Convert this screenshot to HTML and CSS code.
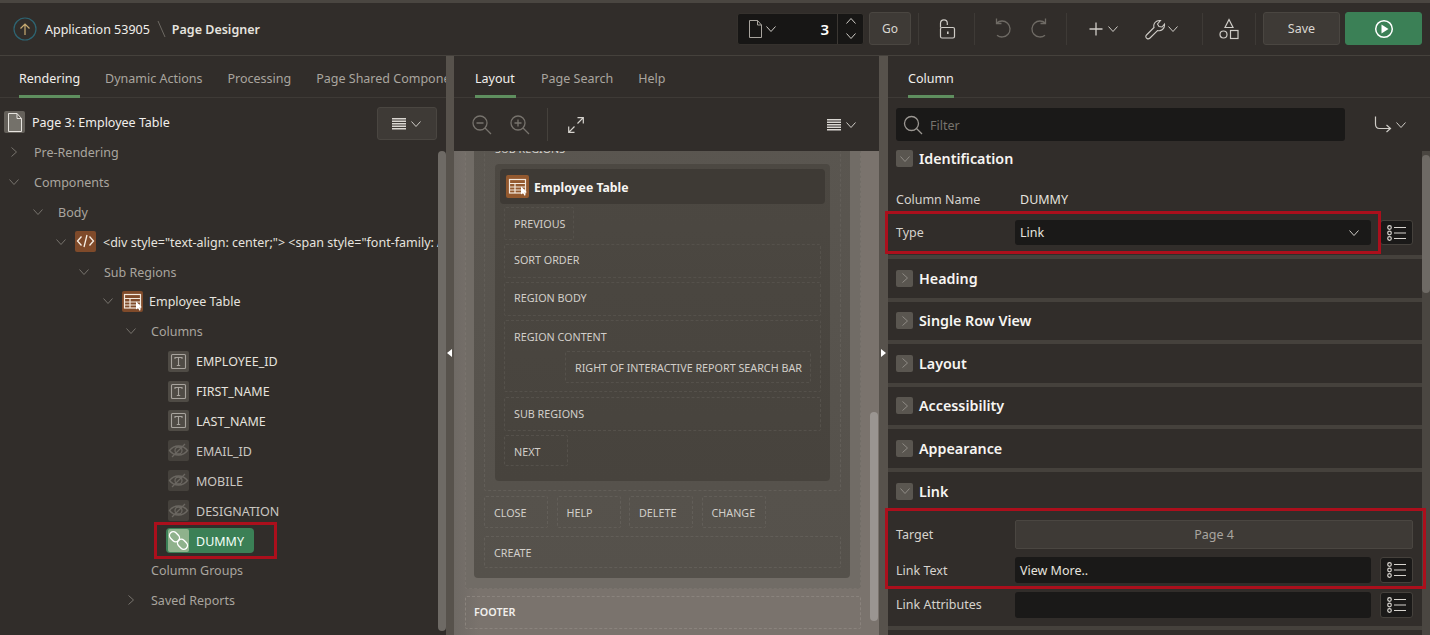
FILE: index.html
```html
<!DOCTYPE html>
<html lang="en">
<head>
<meta charset="UTF-8" />
<title>Page Designer</title>
<link rel="stylesheet" href="styles.css">
</head>
<body>
  <svg class="defs" aria-hidden="true">
    <symbol id="chev-d" viewBox="0 0 12 12"><path d="M1.5 3.5 6 8.500l4.500-5" fill="none" stroke="currentColor"/></symbol>
    <symbol id="chev-r" viewBox="0 0 12 12"><path d="M3.500 1.500 8.500 6l-5 4.500" fill="none" stroke="currentColor"/></symbol>
    <symbol id="menu" viewBox="0 0 14 12"><path d="M0 .75h14M0 3.250h14M0 5.750h14M0 8.250h14M0 10.750h14" stroke="currentColor" stroke-width="1.300"/></symbol>
    <symbol id="list" viewBox="0 0 20 16"><g fill="none" stroke="currentColor" stroke-width="1.200"><circle cx="2.500" cy="2.500" r="1.800"/><circle cx="2.500" cy="8" r="1.800"/><circle cx="2.500" cy="13.500" r="1.800"/><path d="M7 2.500h12M7 8h12M7 13.500h12"/></g></symbol>
    <symbol id="t-col" viewBox="0 0 21 21"><g fill="none" stroke="#a8a49e" stroke-width="1.100"><rect x="3.500" y="3.500" width="14" height="14" rx="1"/><path d="M7 8V6.500h7V8M10.500 6.500v8M8.800 14.500h3.400"/></g></symbol>
    <symbol id="eye-off" viewBox="0 0 21 21"><g fill="none" stroke="#6b6761" stroke-width="1.300"><path d="M1.500 10.500c4.500-6 13.500-6 18 0-4.500 6-13.500 6-18 0z"/><circle cx="10.500" cy="10.500" r="3.500"/><path d="M4 17 17 4"/></g></symbol>
    <symbol id="grid-t" viewBox="0 0 21 21"><g fill="none" stroke="#f3e9de" stroke-width="1.200"><rect x="2.500" y="3.500" width="16" height="13.500"/><path d="M2.500 7.500h16M2.500 11h16M2.500 14h16M8 7.500V17"/></g><path d="M14 10.500v8l2-1.800 1.500 3 1.200-.6-1.400-2.900h2.600z" fill="#fff"/></symbol>
  </svg>

  <div class="topstrip"></div>
  <header class="header">
    <div class="crumb">
      <svg class="up-icon" width="24" height="24" viewBox="0 0 24 24"><circle cx="12" cy="12" r="11" fill="none" stroke="#2e6573" stroke-width="1.200"/><path d="M12 18V7M7.500 11.500 12 7l4.500 4.500" fill="none" stroke="#c9ab72" stroke-width="1.200"/></svg>
      <span class="crumb-app">Application 53905</span>
      <svg class="crumb-sep" width="9" height="18" viewBox="0 0 9 18"><path d="M1 1l7 16" stroke="#6d6963"/></svg>
      <strong class="crumb-page">Page Designer</strong>
    </div>
    <div class="tools">
      <div class="page-select">
        <svg width="15" height="18" viewBox="0 0 15 18"><path d="M1.500.5h8l4 4.500v12.500h-12zM9.500.5V5h4" fill="none" stroke="#a8a49e"/></svg>
        <svg class="chev" width="12" height="12"><use href="#chev-d"/></svg>
        <span class="page-num">3</span>
        <span class="spin">
          <svg class="chev flip" width="12" height="12"><use href="#chev-d"/></svg>
          <svg class="chev" width="12" height="12"><use href="#chev-d"/></svg>
        </span>
      </div>
      <button class="btn btn-go">Go</button>
      <div class="tool-group group-lock">
        <svg width="18" height="20" viewBox="0 0 18 20"><g fill="none" stroke="#cfccc7" stroke-width="1.200"><rect x="2.500" y="8.500" width="14" height="10.500" rx="1.500"/><path d="M2.500 8.500V4.200a3.400 3.400 0 0 1 6.800 0V6"/></g><rect x="9" y="12.500" width="1.600" height="2.500" fill="#cfccc7"/></svg>
      </div>
      <div class="tool-group group-history">
        <svg width="20" height="24" viewBox="0 0 20 24"><path d="M4.500 6.200A8 8 0 1 1 5 18.200M4.500 1.500v5h5" fill="none" stroke="#6f6b65" stroke-width="1.300"/></svg>
        <svg width="20" height="24" viewBox="0 0 20 24"><path d="M15.500 6.200A8 8 0 1 0 15 18.200M15.500 1.500v5h-5" fill="none" stroke="#6f6b65" stroke-width="1.300"/></svg>
      </div>
      <div class="tool-group group-add">
        <svg width="16" height="16" viewBox="0 0 16 16"><path d="M8 1.500v13M1.500 8h13" stroke="#cfccc7" stroke-width="1.300"/></svg>
        <svg class="chev" width="12" height="12"><use href="#chev-d"/></svg>
        <svg class="wrench" width="22" height="22" viewBox="0 0 22 22"><path d="M3 20.500c-1.500-1-1.500-2.500-.5-3.500L10 9.500C9 6 11.500 2 16.500 2.500l-3 3.500 1.500 2.500 3 .5 2.500-3c.5 5-3.500 7.500-7 6.500L6 20c-1 1-2 1.200-3 .5z" fill="none" stroke="#cfccc7" stroke-width="1.100"/></svg>
        <svg class="chev" width="12" height="12"><use href="#chev-d"/></svg>
      </div>
      <div class="tool-group group-shapes">
        <svg width="20" height="22" viewBox="0 0 20 22"><g fill="none" stroke="#cfccc7" stroke-width="1.200"><path d="M10 1.500 14 9.500H6z"/><circle cx="4.500" cy="16.500" r="3.500"/><rect x="11.500" y="12.500" width="7.500" height="8"/></g></svg>
      </div>
      <button class="btn btn-save">Save</button>
      <button class="btn btn-run">
        <svg width="20" height="20" viewBox="0 0 20 20"><circle cx="10" cy="10" r="8.300" fill="none" stroke="#fff" stroke-width="1.500"/><path d="M7.500 5.500 14.500 10l-7 4.500z" fill="#fff"/></svg>
      </button>
    </div>
  </header>

  <main class="designer">
    <section class="pane pane-left">
      <nav class="tabs">
        <a class="tab active">Rendering</a>
        <a class="tab">Dynamic Actions</a>
        <a class="tab">Processing</a>
        <a class="tab">Page Shared Components</a>
      </nav>
      <div class="tree-head">
        <span class="ico ico-page">
          <svg width="16" height="19" viewBox="0 0 16 19"><path d="M1.500.5h8.500l4.500 5v13h-13zM10 .5v5h4.500" fill="#e8e5e0" fill-opacity=".12" stroke="#e8e5e0"/></svg>
        </span>
        <span class="tree-title">Page 3: Employee Table</span>
        <button class="btn btn-menu">
          <svg width="14" height="12"><use href="#menu"/></svg>
          <svg class="chev" width="12" height="12"><use href="#chev-d"/></svg>
        </button>
      </div>
      <div class="tree">
        <div class="row lv0"><svg class="tog" width="12" height="12"><use href="#chev-r"/></svg><span class="muted">Pre-Rendering</span></div>
        <div class="row lv0"><svg class="tog" width="12" height="12"><use href="#chev-d"/></svg><span class="muted">Components</span></div>
        <div class="row lv1"><svg class="tog" width="12" height="12"><use href="#chev-d"/></svg><span class="muted">Body</span></div>
        <div class="row lv2">
          <svg class="tog tog-ico" width="12" height="12"><use href="#chev-d"/></svg>
          <span class="ico ico-region"><svg width="21" height="21" viewBox="0 0 21 21"><path d="M6.500 5.500 2.500 10l4 4.500M14.500 5.500l4 4.500-4 4.500M12 4l-3 12" fill="none" stroke="#f7efe6" stroke-width="1.300"/></svg></span>
          <span class="item">&lt;div style="text-align: center;"&gt; &lt;span style="font-family: Arial, sans-serif;"&gt;</span>
        </div>
        <div class="row lv3"><svg class="tog" width="12" height="12"><use href="#chev-d"/></svg><span class="muted">Sub Regions</span></div>
        <div class="row lv4">
          <svg class="tog tog-ico" width="12" height="12"><use href="#chev-d"/></svg>
          <span class="ico ico-region"><svg width="21" height="21"><use href="#grid-t"/></svg></span>
          <span class="item">Employee Table</span>
        </div>
        <div class="row lv5"><svg class="tog" width="12" height="12"><use href="#chev-d"/></svg><span class="muted">Columns</span></div>
        <div class="row lv6"><span class="ico ico-col"><svg width="21" height="21"><use href="#t-col"/></svg></span><span class="item">EMPLOYEE_ID</span></div>
        <div class="row lv6"><span class="ico ico-col"><svg width="21" height="21"><use href="#t-col"/></svg></span><span class="item">FIRST_NAME</span></div>
        <div class="row lv6"><span class="ico ico-col"><svg width="21" height="21"><use href="#t-col"/></svg></span><span class="item">LAST_NAME</span></div>
        <div class="row lv6"><span class="ico ico-hidden"><svg width="21" height="21"><use href="#eye-off"/></svg></span><span class="item dim">EMAIL_ID</span></div>
        <div class="row lv6"><span class="ico ico-hidden"><svg width="21" height="21"><use href="#eye-off"/></svg></span><span class="item dim">MOBILE</span></div>
        <div class="row lv6"><span class="ico ico-hidden"><svg width="21" height="21"><use href="#eye-off"/></svg></span><span class="item dim">DESIGNATION</span></div>
        <div class="row lv6">
          <span class="selected">
            <span class="ico ico-link"><svg width="21" height="21" viewBox="0 0 21 21"><g fill="none" stroke="#fff" stroke-width="1.400"><rect x="1" y="3" width="11" height="7.500" rx="3.750" transform="rotate(45 6.500 6.750)"/><rect x="9" y="10.500" width="11" height="7.500" rx="3.750" transform="rotate(45 14.500 14.250)"/></g></svg></span>
            <span class="item">DUMMY</span>
          </span>
        </div>
        <div class="row lv5b"><span class="muted">Column Groups</span></div>
        <div class="row lv5"><svg class="tog" width="12" height="12"><use href="#chev-r"/></svg><span class="muted">Saved Reports</span></div>
      </div>
      <div class="thumb thumb-left"></div>
    </section>

    <div class="splitter"><span class="arrow arrow-left"></span></div>

    <section class="pane pane-mid">
      <nav class="tabs">
        <a class="tab active">Layout</a>
        <a class="tab">Page Search</a>
        <a class="tab">Help</a>
      </nav>
      <div class="mid-bar">
        <svg width="20" height="20" viewBox="0 0 20 20"><g fill="none" stroke="#77736d" stroke-width="1.300"><circle cx="8" cy="8" r="7"/><path d="M13 13l6 6M4.500 8h7"/></g></svg>
        <svg class="zoom-in" width="20" height="20" viewBox="0 0 20 20"><g fill="none" stroke="#77736d" stroke-width="1.300"><circle cx="8" cy="8" r="7"/><path d="M13 13l6 6M4.500 8h7M8 4.500v7"/></g></svg>
        <span class="mid-div"></span>
        <svg width="16" height="16" viewBox="0 0 16 16"><g fill="none" stroke="#d6d3ce" stroke-width="1.200"><path d="M9.500.7h5.800v5.800M15.300.7 9.500 6.500M6.500 15.300H.7V9.500M.7 15.300l5.800-5.800"/></g></svg>
        <span class="mid-menu">
          <svg width="14" height="12"><use href="#menu"/></svg>
          <svg class="chev" width="12" height="12"><use href="#chev-d"/></svg>
        </span>
      </div>
      <div class="canvas">
        <div class="slot slot-body">
          <div class="dark">
            <div class="slot slot-sub">
              <span class="slot-label">SUB REGIONS</span>
              <div class="card">
                <div class="card-head">
                  <span class="ico ico-region ico-card"><svg width="21" height="21"><use href="#grid-t"/></svg></span>
                  <strong>Employee Table</strong>
                </div>
                <div class="slot s-prev">PREVIOUS</div>
                <div class="slot s-wide">SORT ORDER</div>
                <div class="slot s-wide">REGION BODY</div>
                <div class="slot s-content">
                  <span>REGION CONTENT</span>
                  <div class="slot s-right">RIGHT OF INTERACTIVE REPORT SEARCH BAR</div>
                </div>
                <div class="slot s-wide s-subs">SUB REGIONS</div>
                <div class="slot s-next">NEXT</div>
              </div>
            </div>
            <div class="btn-slots">
              <div class="slot s-btn">CLOSE</div>
              <div class="slot s-btn">HELP</div>
              <div class="slot s-btn">DELETE</div>
              <div class="slot s-btn">CHANGE</div>
            </div>
            <div class="slot s-create">CREATE</div>
          </div>
        </div>
        <div class="slot s-footer">FOOTER</div>
        <div class="thumb thumb-mid"></div>
      </div>
    </section>

    <div class="splitter"><span class="arrow arrow-right"></span></div>

    <section class="pane pane-right">
      <nav class="tabs">
        <a class="tab active">Column</a>
      </nav>
      <div class="filter-bar">
        <div class="filter">
          <svg width="20" height="20" viewBox="0 0 20 20"><g fill="none" stroke="#9b9792" stroke-width="1.300"><circle cx="8.500" cy="8.500" r="7"/><path d="M13.500 13.500l5.500 5.500"/></g></svg>
          <span>Filter</span>
        </div>
        <span class="filter-go">
          <svg width="20" height="20" viewBox="0 0 20 20"><path d="M1.500 1.500V9c0 3 1.500 4.500 4 4.500H16M12.500 10l4 3.500-4 3.500" fill="none" stroke="#cfccc7" stroke-width="1.200"/></svg>
          <svg class="chev" width="12" height="12"><use href="#chev-d"/></svg>
        </span>
      </div>
      <div class="props">
        <div class="sections">
          <div class="sect sect-ident">
            <h3 class="sect-head ident-head"><span class="toggle"><svg width="12" height="12"><use href="#chev-d"/></svg></span>Identification</h3>
            <div class="fields">
              <label class="f-name">Column Name</label><span class="f-value">DUMMY</span>
              <label>Type</label>
              <div class="control">Link<svg class="chev select-chev" width="12" height="12"><use href="#chev-d"/></svg></div>
              <button class="list-btn"><svg width="20" height="16"><use href="#list"/></svg></button>
            </div>
          </div>
          <div class="sect"><h3 class="sect-head"><span class="toggle"><svg width="12" height="12"><use href="#chev-r"/></svg></span>Heading</h3></div>
          <div class="sect"><h3 class="sect-head"><span class="toggle"><svg width="12" height="12"><use href="#chev-r"/></svg></span>Single Row View</h3></div>
          <div class="sect"><h3 class="sect-head"><span class="toggle"><svg width="12" height="12"><use href="#chev-r"/></svg></span>Layout</h3></div>
          <div class="sect"><h3 class="sect-head"><span class="toggle"><svg width="12" height="12"><use href="#chev-r"/></svg></span>Accessibility</h3></div>
          <div class="sect"><h3 class="sect-head"><span class="toggle"><svg width="12" height="12"><use href="#chev-r"/></svg></span>Appearance</h3></div>
          <div class="sect sect-link">
            <h3 class="sect-head"><span class="toggle"><svg width="12" height="12"><use href="#chev-d"/></svg></span>Link</h3>
            <div class="fields fields-link">
              <label class="lab-low">Target</label>
              <button class="target">Page 4</button>
              <label class="lab-low">Link Text</label>
              <div class="control">View More..</div>
              <button class="list-btn"><svg width="20" height="16"><use href="#list"/></svg></button>
              <label>Link Attributes</label>
              <div class="control"></div>
              <button class="list-btn"><svg width="20" height="16"><use href="#list"/></svg></button>
            </div>
          </div>
          <div class="sect"></div>
        </div>
        <div class="props-track"><div class="thumb thumb-right"></div></div>
      </div>
    </section>
  </main>

  <!-- red annotation boxes drawn over the screenshot -->
  <div class="mark mark-dummy"></div>
  <div class="mark mark-type"></div>
  <div class="mark mark-link"></div>
</body>
</html>
```

FILE: styles.css
```css
* {
  box-sizing: border-box;
}
body {
  margin: 0;
  width: 1430px;
  height: 635px;
  overflow: hidden;
  position: relative;
  background: #312d2a;
  color: #e6e3df;
  font-family: "Noto Sans", "Open Sans", sans-serif;
  font-size: 12.5px;
  line-height: 16px;
}
button {
  font: inherit;
  padding: 0;
}
h3 {
  margin: 0;
}
.defs {
  position: absolute;
  width: 0;
  height: 0;
}
.chev {
  color: #cfccc7;
  flex: none;
}
.flip {
  transform: scaleY(-1);
}
.topstrip {
  height: 3px;
  background: #4a4641;
}

/* header */
.header {
  height: 53px;
  display: flex;
  align-items: center;
  justify-content: space-between;
  padding: 0 8px 1px 13px;
  border-bottom: 1px solid #45413c;
}
.crumb {
  display: flex;
  align-items: center;
  margin-top: 1px;
}
.crumb-app {
  margin-left: 8px;
  padding-top: 2px;
  color: #f1efec;
}
.crumb-sep {
  margin: 0 6px 0 7px;
}
.crumb-page {
  padding-top: 2px;
  font-weight: 600;
  color: #e6e3df;
}
.tools {
  display: flex;
  align-items: center;
}
.page-select {
  width: 127px;
  height: 32px;
  display: flex;
  align-items: center;
  padding-left: 10px;
  background: #171615;
  border: 1px solid #35312d;
  border-radius: 3px;
}
.page-select .chev {
  margin-left: 2px;
}
.page-num {
  flex: 1;
  text-align: right;
  padding-right: 8px;
  font-size: 15px;
  font-weight: 600;
  color: #fff;
}
.spin {
  width: 26px;
  height: 30px;
  display: flex;
  flex-direction: column;
  align-items: center;
  justify-content: center;
  gap: 3px;
  border-left: 1px solid #3b3733;
}
.spin .chev {
  margin: 0;
}
.btn {
  height: 33px;
  background: #3e3a36;
  border: 1px solid #4a4641;
  border-radius: 3px;
  color: #d9d6d1;
}
.btn-go {
  width: 42px;
  margin-left: 5px;
  margin-right: 7px;
  font-size: 12px;
}
.tool-group {
  height: 32px;
  display: flex;
  align-items: center;
  border-left: 1px solid #3e3a36;
}
.group-lock {
  width: 56px;
  justify-content: center;
}
.group-history {
  width: 92px;
  justify-content: center;
  gap: 18px;
}
.group-add {
  width: 136px;
  padding-left: 21px;
  gap: 3px;
}
.group-add .wrench {
  margin-left: 22px;
}
.group-add .wrench + .chev {
  margin-left: -2px;
}
.group-shapes {
  width: 54px;
  justify-content: center;
  border-right: 1px solid #3e3a36;
  margin-right: 7px;
}
.btn-save {
  width: 77px;
  margin-right: 5px;
}
.btn-run {
  width: 77px;
  display: flex;
  align-items: center;
  justify-content: center;
  background: #3b8056;
  border-color: #3b8056;
}

/* three panes */
.designer {
  height: 579px;
  display: grid;
  grid-template-columns: 446px 8px 425px 9px 542px;
}
.pane {
  position: relative;
  min-width: 0;
  overflow: hidden;
}
.splitter {
  position: relative;
  background: #57524c;
}
.arrow {
  position: absolute;
  top: 293px;
  width: 0;
  height: 0;
  border-top: 4px solid transparent;
  border-bottom: 4px solid transparent;
}
.arrow-left {
  left: 1px;
  border-right: 5px solid #fff;
}
.arrow-right {
  left: 2px;
  border-left: 5px solid #fff;
}
.thumb {
  position: absolute;
  width: 8px;
  border-radius: 4px;
}

/* tabs */
.tabs {
  height: 42px;
  display: flex;
  gap: 25px;
  padding-left: 19px;
  border-bottom: 1px solid #3e3a36;
  white-space: nowrap;
}
.pane-mid .tabs {
  padding-left: 21px;
}
.pane-mid .tab.active {
  width: 41px;
}
.pane-right .tabs {
  padding-left: 20px;
}
.tab {
  height: 42px;
  padding-top: 15px;
  color: #a9a59f;
}
.tab.active {
  color: #f1efec;
  border-bottom: 3px solid #5f8f5f;
}

/* left tree */
.tree-head {
  height: 39px;
  display: flex;
  padding: 9px 9px 0 4px;
}
.ico {
  width: 21px;
  height: 21px;
  flex: none;
  display: flex;
  align-items: center;
  justify-content: center;
  border-radius: 2px;
}
.ico-page {
  height: 22px;
  margin-top: 4px;
  background: #65615b;
}
.tree-title {
  margin: 8px 0 0 7px;
  color: #f1efec;
}
.btn-menu {
  width: 60px;
  margin-left: auto;
  display: flex;
  align-items: center;
  justify-content: center;
  gap: 4px;
  color: #d9d6d1;
}
.tree {
  width: 438px;
  overflow: hidden;
}
.row {
  height: 29.900px;
  display: flex;
  align-items: center;
  white-space: nowrap;
}
.lv0 { padding-left: 8px; }
.lv1 { padding-left: 32px; }
.lv2 { padding-left: 55px; }
.lv3 { padding-left: 78px; }
.lv4 { padding-left: 102px; }
.lv5 { padding-left: 125px; }
.lv5b { padding-left: 151px; }
.lv6 { padding-left: 168px; }
.tog {
  flex: none;
  margin-right: 14px;
  color: #77736d;
}
.tog-ico {
  margin-right: 8px;
}
.muted {
  padding-top: 2px;
  color: #a9a59f;
}
.item {
  margin-left: 7px;
  padding-top: 2px;
  color: #e6e3df;
}
.lv4 .item {
  margin-left: 6px;
}
.item.dim {
  color: #cac7c2;
}
.ico-region {
  background: #7f4a2a;
}
.ico-col {
  background: #4f4b45;
}
.ico-hidden {
  background: #45413c;
}
.selected {
  width: 88px;
  height: 25px;
  margin-left: -2px;
  padding-left: 2px;
  display: flex;
  align-items: center;
  background: #3b8056;
  border-radius: 4px;
}
.selected .item {
  color: #f3fff8;
}
.ico-link {
  height: 23px;
  background: #8fb28c;
}
.thumb-left {
  left: 438px;
  top: 95px;
  height: 480px;
  background: #6e6a65;
}

/* middle pane */
.mid-bar {
  height: 53px;
  display: flex;
  align-items: center;
  padding-left: 18px;
  background: #312d2a;
}
.zoom-in {
  margin-left: 18px;
}
.mid-div {
  width: 1px;
  height: 33px;
  margin: 0 20px 0 17px;
  background: #45413c;
}
.mid-menu {
  margin-left: auto;
  margin-right: 22px;
  display: flex;
  align-items: center;
  gap: 4px;
  color: #d9d6d1;
}
.canvas {
  position: relative;
  height: 484px;
  overflow: hidden;
  padding: 0 18px 0 11px;
  background: linear-gradient(to right, #6f6a65, #7a736d 6%, #7a736d);
  font-size: 10.750px;
  color: #d2cfca;
}
.slot {
  border: 1px dashed #625e58;
  border-radius: 2px;
}
.slot-body {
  margin-top: -20px;
  padding: 0 10px 10px 8px;
  background: #716c66;
  border-color: #7a746e;
}
.dark {
  padding: 0 9px 10px 10px;
  background: linear-gradient(#5a5650, #55514b);
  border-radius: 0 0 4px 4px;
}
.slot-sub {
  padding: 8px 10px 9px;
}
.slot-label {
  display: block;
  height: 16px;
}
.card {
  margin: 7px 0 0;
  padding: 5px 5px 15px;
  background: linear-gradient(#4c4842, #47433d);
  border-radius: 4px;
}
.card .slot {
  border-color: #55514b;
}
.card-head {
  height: 35px;
  margin-bottom: 3px;
  display: flex;
  align-items: center;
  gap: 5px;
  padding-left: 6px;
  background: #3e3a35;
  border-radius: 4px;
  font-size: 12.250px;
  color: #f7f5f2;
}
.card-head strong {
  padding-top: 2px;
}
.ico-card {
  width: 23px;
  height: 23px;
  background: #93592f;
}
.s-prev,
.s-wide,
.s-next,
.s-content {
  margin: 0 4px 4px;
  padding: 8px 9px;
}
.s-prev {
  width: 70px;
  height: 33px;
}
.s-wide {
  height: 34px;
  padding-top: 7px;
}
.s-content {
  height: 72px;
  margin-bottom: 5px;
}
.s-right {
  width: 246px;
  height: 32px;
  margin: 6px 0 0 auto;
  padding: 8px 9px;
  white-space: nowrap;
}
.s-subs {
  margin-bottom: 4px;
  padding-top: 8px;
}
.s-next {
  width: 64px;
  height: 31px;
  margin-bottom: 0;
}
.btn-slots {
  margin-top: 5px;
  display: flex;
  gap: 8.500px;
}
.s-btn {
  width: 64px;
  height: 32px;
  padding: 8px 9px;
}
.s-create {
  height: 32px;
  margin-top: 8px;
  padding: 8px 9px;
}
.s-footer {
  height: 33px;
  margin-top: 7px;
  padding: 7px 8px;
  font-weight: 600;
  color: #f1efec;
  border-color: #8a837d;
}
.thumb-mid {
  left: 416px;
  top: 261px;
  height: 209px;
  background: #9a9591;
}

/* right pane */
.filter-bar {
  height: 53px;
  display: flex;
  align-items: flex-start;
  padding: 10px 0 0 8px;
}
.filter {
  width: 449px;
  height: 33px;
  display: flex;
  align-items: center;
  gap: 7px;
  padding-left: 7px;
  background: #1a1918;
  border-radius: 3px;
  color: #77736d;
}
.filter span {
  padding-top: 2px;
}
.filter-go {
  margin: 7px 0 0 29px;
  display: flex;
  align-items: center;
  gap: 1px;
}
.props {
  display: flex;
  height: 484px;
}
.sections {
  width: 534px;
  display: flex;
  flex-direction: column;
  gap: 4px;
  background: #45413c;
}
.sect {
  flex: none;
  height: 38.600px;
  background: #312d2a;
}
.sect-ident {
  height: 104px;
}
.sect-link {
  height: 154px;
}
.sect-head {
  height: 38.600px;
  display: flex;
  align-items: center;
  padding: .5px 0 0 8px;
  font-size: 14.300px;
  font-weight: 600;
  color: #f7f5f2;
}
.ident-head {
  height: 16px;
  padding-top: 0;
}
.toggle {
  width: 17px;
  height: 17px;
  margin: -1px 6px 0 0;
  display: flex;
  align-items: center;
  justify-content: center;
  background: #5a5650;
  border-radius: 2px;
  color: #8f8b85;
}
.fields {
  display: grid;
  grid-template-columns: 110px 356px 33px;
  column-gap: 9px;
  align-items: center;
  padding: 20px 0 0 8px;
}
.fields-link {
  padding-top: 9px;
  row-gap: 8.500px;
}
.f-name {
  height: 25px;
  margin-bottom: 8px;
  display: flex;
  align-items: center;
}
.f-value {
  grid-column: 2 / 4;
  margin-bottom: 8px;
  padding-left: 5px;
}
label {
  color: #d6d3ce;
}
.lab-low {
  padding-top: 2px;
}
.control {
  height: 25px;
  display: flex;
  align-items: center;
  justify-content: space-between;
  padding: 0 11px 0 5px;
  background: #1a1918;
  border-radius: 3px;
  color: #e6e3df;
}
.list-btn {
  height: 25px;
  display: flex;
  align-items: center;
  justify-content: center;
  background: #1a1918;
  border: 1px solid #45413c;
  border-radius: 3px;
  color: #d6d3ce;
}
.fields-link .control,
.fields-link .list-btn {
  height: 26px;
}
.fields-link .control {
  padding-top: 2px;
}
.target {
  grid-column: 2 / 4;
  height: 29px;
  padding-top: 2px;
  background: #3e3a36;
  border: 1px solid #4a4641;
  border-radius: 2px;
  color: #a9a59f;
}
.props-track {
  position: relative;
  width: 8px;
  background: #4a4641;
}
.thumb-right {
  top: 4px;
  left: 0;
  height: 138px;
  background: #6e6a65;
}

/* annotations */
.mark {
  position: absolute;
  border: 3.500px solid #ab0f1c;
}
.mark-dummy {
  left: 154px;
  top: 522px;
  width: 123px;
  height: 37px;
}
.mark-type {
  left: 885px;
  top: 211px;
  width: 496px;
  height: 43px;
}
.mark-link {
  left: 885px;
  top: 508px;
  width: 541px;
  height: 81px;
}
```
